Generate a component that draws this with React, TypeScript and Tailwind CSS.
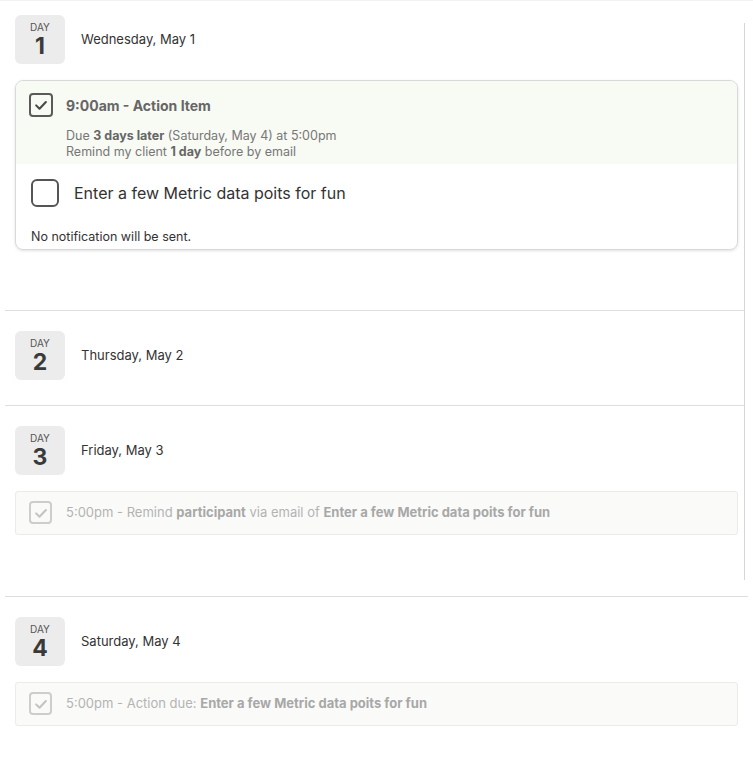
import { ReactNode } from "react";

const CheckMark = ({ className }: { className: string }) => (
    <svg viewBox="0 0 24 24" className={className} fill="none" stroke="currentColor"
        strokeWidth={2.8} strokeLinecap="round" strokeLinejoin="round">
        <polyline points="5.5 12.5 10 17 18.5 8" />
    </svg>
)

const DayHeader = ({ day, date }: { day: number; date: string }) => (
    <div className="flex items-center gap-4">
        <div className="w-[50px] h-[49px] bg-[#ececec] rounded-md flex flex-col items-center pt-[7px]">
            <span className="text-[10px] leading-[11px] text-[#555]">DAY</span>
            <span className="text-[23px] leading-[26px] font-bold text-[#3a3a3a]">{day}</span>
        </div>
        <span className="text-[13px] text-[#333] pt-px">{date}</span>
    </div>
)

const MutedItem = ({ children }: { children: ReactNode }) => (
    <div className="mt-4 mb-9 h-[44px] flex items-center gap-[14px] px-[13px]
        bg-[#fafbf9] border border-[#ebebeb] rounded-[3px]">
        <div className="w-[23px] h-[23px] border-2 border-[#cdcdcd] rounded-[4px] flex items-center justify-center text-[#c4c4c4]">
            <CheckMark className="w-[18px] h-[18px]" />
        </div>
        <span className="text-[13px] text-[#b3b3b3]">{children}</span>
    </div>
)

const Section = ({ first, children }: { first?: boolean; children: ReactNode }) => (
    <section className={`ml-[5px] mr-[8px] pl-[10px] pr-[7px] pb-[25px] ${first ? "pt-[14px]" : "pt-5 border-t border-[#dedede]"}`}>
        {children}
    </section>
)

export default function App() {
    return (
        <div className="relative w-[753px] h-[770px] bg-white border-t border-[#f2f2f2] font-['Inter',sans-serif] overflow-hidden">
            {/* scroll track on the right */}
            <div className="absolute left-[744px] top-[22px] w-px h-[557px] bg-[#d6d6d6]" />

            <Section first>
                <DayHeader day={1} date="Wednesday, May 1" />

                <div className="mt-4 mb-[35px] border border-[#d9d9d9] rounded-lg shadow-[0_1px_3px_rgba(0,0,0,0.12)] overflow-hidden">
                    <div className="bg-[#f8faf4] pt-3 pb-[4px] px-[13px]">
                        <div className="flex items-center gap-[13px]">
                            <div className="w-[24px] h-[24px] border-2 border-[#5a5a5a] rounded-[4px] flex items-center justify-center text-[#4a4a4a]">
                                <CheckMark className="w-[18px] h-[18px]" />
                            </div>
                            <span className="text-[14px] font-bold text-[#666]">9:00am - Action Item</span>
                        </div>
                        <div className="pl-[37px] mt-[11px] text-[12.5px] leading-4 text-[#777]">
                            <p>Due <b className="text-[#666]">3 days later</b> (Saturday, May 4) at 5:00pm</p>
                            <p>Remind my client <b className="text-[#666]">1 day</b> before by email</p>
                        </div>
                    </div>
                    <div className="px-[15px] pt-[15px] pb-[2px]">
                        <div className="flex items-center gap-[15px]">
                            <div className="w-[28px] h-[28px] border-2 border-[#555] rounded-md" />
                            <span className="text-[16px] text-[#333]">Enter a few Metric data poits for fun</span>
                        </div>
                        <p className="mt-[21px] text-[12.5px] text-[#333]">No notification will be sent.</p>
                    </div>
                </div>
            </Section>

            <Section>
                <DayHeader day={2} date="Thursday, May 2" />
            </Section>

            <Section>
                <DayHeader day={3} date="Friday, May 3" />
                <MutedItem>
                    5:00pm - Remind <b className="text-[#a8a8a8]">participant</b> via email of{" "}
                    <b className="text-[#a8a8a8]">Enter a few Metric data poits for fun</b>
                </MutedItem>
            </Section>

            <section className="ml-[5px] mr-[5px] pl-[10px] pr-[10px] pt-5 border-t border-[#dedede]">
                <DayHeader day={4} date="Saturday, May 4" />
                <MutedItem>
                    5:00pm - Action due: <b className="text-[#a8a8a8]">Enter a few Metric data poits for fun</b>
                </MutedItem>
            </section>
        </div>
    )
}
